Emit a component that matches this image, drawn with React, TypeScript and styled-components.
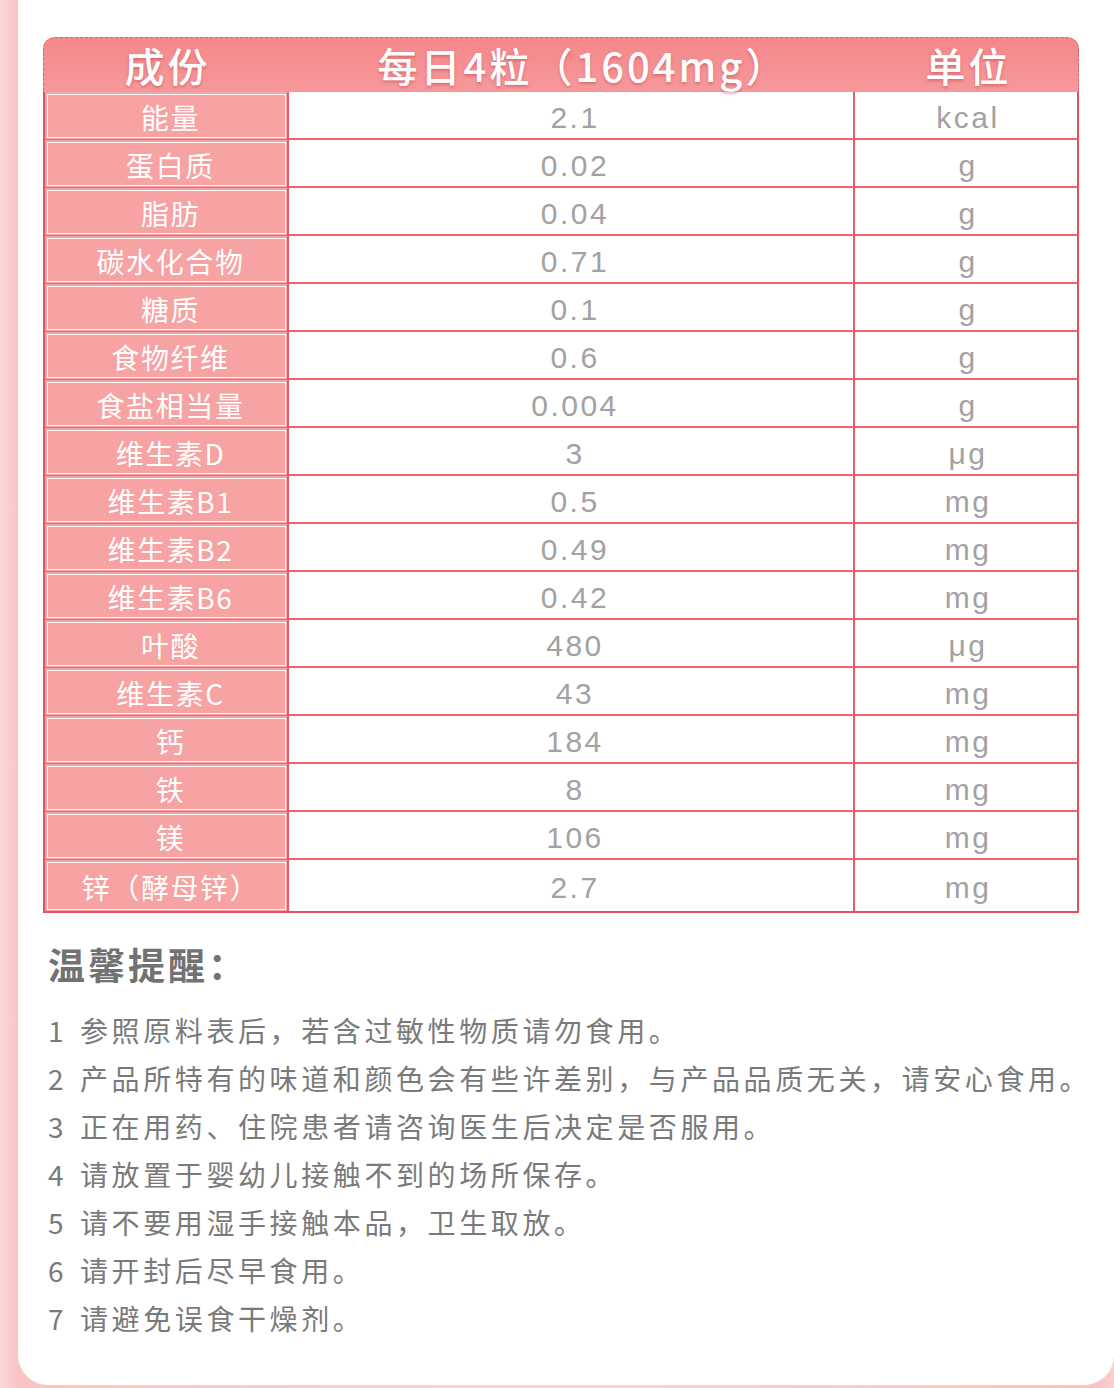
import styled, { createGlobalStyle } from 'styled-components';

const GlobalStyle = createGlobalStyle`
  html, body {
    margin: 0;
    padding: 0;
    background: #fcd2d2;
  }
  * { box-sizing: border-box; }
`;

const Page = styled.div`
  width: 1114px;
  height: 1388px;
  display: flex;
  padding: 0 12px 3px 18px;
  background: linear-gradient(90deg, #fdd9d9 0%, #f9c4c4 1.6%, #fcd3d3 50%, #f9c2c2 98.5%, #fcd0d0 100%);
  font-family: "Noto Sans CJK SC", "Noto Sans", sans-serif;
`;

const Card = styled.div`
  flex: 1;
  background: #fff;
  border-radius: 0 0 30px 30px;
  padding: 37px 23px 0 25px;
`;

const Table = styled.div`
  width: 1036px;
`;

const Head = styled.div`
  display: grid;
  grid-template-columns: 247px 568px 1fr;
  align-items: center;
  height: 55px;
  background: linear-gradient(180deg, #f4878a 0%, #f6999b 100%);
  border: 1px dashed #dc6068;
  border-bottom: none;
  border-radius: 12px 12px 0 0;
`;

const HeadCell = styled.div<{ $shift?: number }>`
  text-align: center;
  color: #fff;
  font-size: 40px;
  font-weight: 500;
  line-height: 54px;
  letter-spacing: 3px;
  white-space: nowrap;
  text-shadow: 0 2px 3px rgba(190, 60, 70, 0.45);
  transform: translateX(${(p) => p.$shift ?? 0}px);
`;

const Body = styled.div`
  border: 2px solid #e4515c;
  border-top: none;
`;

const Row = styled.div<{ $last?: boolean }>`
  display: grid;
  grid-template-columns: 244px 566px 1fr;
  height: ${(p) => (p.$last ? 51 : 48)}px;
  border-bottom: ${(p) => (p.$last ? 'none' : '2px solid #ef6670')};
`;

const NameCell = styled.div`
  background: #f7a2a3;
  border-right: 2px solid #ec5b66;
  padding: 2px 1px 1px 2px;
  display: flex;
`;

const NameBox = styled.div`
  flex: 1;
  border: 1px solid rgba(255, 255, 255, 0.95);
  display: flex;
  align-items: center;
  justify-content: center;
  padding: 2px 0 0 8px;
  color: #fff;
  font-size: 28px;
  letter-spacing: 1.6px;
  white-space: nowrap;
`;

const ValueCell = styled.div<{ $unit?: boolean }>`
  display: flex;
  align-items: center;
  justify-content: center;
  color: #a2a2a2;
  font-family: "Liberation Sans", "Noto Sans CJK SC", sans-serif;
  font-size: 30px;
  letter-spacing: 2.5px;
  border-right: ${(p) => (p.$unit ? 'none' : '2px solid #ec5b66')};
  padding: 4px 0 0 ${(p) => (p.$unit ? 4 : 8)}px;
`;

const Tips = styled.div`
  padding: 23px 0 0 5px;
  color: #757575;
`;

const TipsTitle = styled.div`
  font-size: 37px;
  font-weight: 700;
  color: #727272;
  letter-spacing: 3px;
  line-height: 56px;
  margin-bottom: 14px;
`;

const TipList = styled.ol`
  list-style: none;
  margin: 0;
  padding: 0;
`;

const Tip = styled.li`
  font-size: 28px;
  line-height: 48px;
  letter-spacing: 3.6px;
  white-space: nowrap;
  color: #7a7a7a;
`;

const TipNum = styled.span`
  display: inline-block;
  width: 32px;
`;

const rows: [string, string, string][] = [
  ['能量', '2.1', 'kcal'],
  ['蛋白质', '0.02', 'g'],
  ['脂肪', '0.04', 'g'],
  ['碳水化合物', '0.71', 'g'],
  ['糖质', '0.1', 'g'],
  ['食物纤维', '0.6', 'g'],
  ['食盐相当量', '0.004', 'g'],
  ['维生素D', '3', 'μg'],
  ['维生素B1', '0.5', 'mg'],
  ['维生素B2', '0.49', 'mg'],
  ['维生素B6', '0.42', 'mg'],
  ['叶酸', '480', 'μg'],
  ['维生素C', '43', 'mg'],
  ['钙', '184', 'mg'],
  ['铁', '8', 'mg'],
  ['镁', '106', 'mg'],
  ['锌（酵母锌）', '2.7', 'mg'],
];

const tips = [
  '参照原料表后，若含过敏性物质请勿食用。',
  '产品所特有的味道和颜色会有些许差别，与产品品质无关，请安心食用。',
  '正在用药、住院患者请咨询医生后决定是否服用。',
  '请放置于婴幼儿接触不到的场所保存。',
  '请不要用湿手接触本品，卫生取放。',
  '请开封后尽早食用。',
  '请避免误食干燥剂。',
];

export default function App() {
  return (
    <Page>
      <GlobalStyle />
      <Card>
        <Table>
          <Head>
            <HeadCell $shift={0}>成份</HeadCell>
            <HeadCell $shift={8}>每日4粒（1604mg）</HeadCell>
            <HeadCell>单位</HeadCell>
          </Head>
          <Body>
            {rows.map(([name, value, unit], i) => (
              <Row key={name} $last={i === rows.length - 1}>
                <NameCell>
                  <NameBox>{name}</NameBox>
                </NameCell>
                <ValueCell>{value}</ValueCell>
                <ValueCell $unit>{unit}</ValueCell>
              </Row>
            ))}
          </Body>
        </Table>
        <Tips>
          <TipsTitle>温馨提醒：</TipsTitle>
          <TipList>
            {tips.map((t, i) => (
              <Tip key={i}>
                <TipNum>{i + 1}</TipNum>
                {t}
              </Tip>
            ))}
          </TipList>
        </Tips>
      </Card>
    </Page>
  );
}
